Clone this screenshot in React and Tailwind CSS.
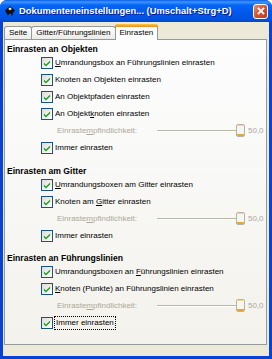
import React from 'react';

const font = { fontFamily: '"Liberation Sans", Arial, sans-serif' };

const Check = () => (
  <span className="w-[12px] h-[12px] border border-[#1C5180] bg-[linear-gradient(135deg,#DCDCD7,#FFFFFF)] flex items-center justify-center shrink-0">
    <svg width="8" height="8" viewBox="0 0 9 9">
      <path d="M1 4 L3.3 6.3 L8 1.6 L8 3.8 L3.3 8.4 L1 6.2 Z" fill="#21A121" />
    </svg>
  </span>
);

const U = ({ children }) => <span className="underline underline-offset-[1px]">{children}</span>;

const Row = ({ children, focus }) => (
  <div className="h-[17px] flex items-center pl-[34px]">
    <Check />
    <span className={focus ? 'ml-[1px] px-[1px] border border-dotted border-black leading-[12px] whitespace-nowrap' : 'ml-[2px] leading-[12px] whitespace-nowrap'}>
      {children}
    </span>
  </div>
);

const Slider = () => (
  <div className="h-[17px] flex items-center pl-[50px] text-[#ACA899]">
    <span className="w-[100px] leading-[12px] whitespace-nowrap">
      Einraste<U>m</U>pfindlichkeit:
    </span>
    <div className="relative w-[88px] h-[13px] flex items-center">
      <div className="w-[80px] h-[2px] border-t border-[#B9B8AE] border-b border-b-white" />
      <div className="absolute left-[79px] top-0 w-[9px] h-[13px] border border-[#B4B3A8] rounded-[2px] bg-[#F7F6EE] overflow-hidden flex flex-col justify-between">
        <div className="h-[1px] bg-[#F7D595]" />
        <div className="h-[2px] bg-[#E8A33C]" />
      </div>
    </div>
    <span className="ml-[3px] leading-[12px]">50,0</span>
  </div>
);

const Header = ({ children }) => (
  <div className="h-[10px] flex items-center font-bold text-[8.6px] whitespace-nowrap">{children}</div>
);

const Tab = ({ children, active }) =>
  active ? (
    <div className="h-[16px] -mb-[1px] relative z-10 px-[4px] bg-white border-x border-[#919B9C] rounded-t-[3px] flex flex-col">
      <div className="h-[3px] -mx-[5px] rounded-t-[3px] bg-[linear-gradient(#FFC83C,#E68B2C)]" />
      <span className="leading-[12px] whitespace-nowrap">{children}</span>
    </div>
  ) : (
    <div className="h-[13px] px-[4px] border-x border-t border-[#919B9C] rounded-t-[3px] bg-[linear-gradient(#FFFFFF,#ECEBE6)] flex items-center -mr-[1px]">
      <span className="leading-[12px] whitespace-nowrap">{children}</span>
    </div>
  );

export default function App() {
  return (
    <div className="w-[272px] h-[359px] bg-[#0842D6] rounded-t-[7px] flex flex-col overflow-hidden text-[8px] text-black" style={font}>
      <div className="h-[22px] shrink-0 flex items-center pl-[4px] pr-[4px] bg-[linear-gradient(#0A5DE8_0px,#3D95FF_2px,#0666F5_5px,#0058EE_12px,#0052E0_19px,#0047D0_22px)]">
        <svg width="12" height="12" viewBox="0 0 13 13" className="shrink-0">
          <path d="M6.5 1 L12 6 L10 8 L9 12 L7 9 L4 11 L1 6 Z" fill="#111" />
          <path d="M6.5 2.5 L9 5 L7.5 4.6 L6.5 6 L5 4.4 L4 5 Z" fill="#fff" />
        </svg>
        <span className="ml-[3px] text-white font-bold text-[9.4px] whitespace-nowrap [text-shadow:1px_1px_0_#0A1883]">
          Dokumenteneinstellungen... (Umschalt+Strg+D)
        </span>
        <div className="ml-auto w-[15px] h-[15px] rounded-[3px] border border-white bg-[linear-gradient(135deg,#EB8C6E,#D5532F_50%,#C3381A)] flex items-center justify-center">
          <svg width="8" height="8" viewBox="0 0 9 9">
            <path d="M1 1 L8 8 M8 1 L1 8" stroke="#fff" strokeWidth="2" />
          </svg>
        </div>
      </div>
      <div className="flex-1 mx-[3px] mb-[3px] bg-[#ECE9D8] flex flex-col pl-[1px] pr-[2px] pb-[11px]">
        <div className="h-[17px] shrink-0 flex items-end">
          <Tab>Seite</Tab>
          <Tab>Gitter/Führungslinien</Tab>
          <Tab active>Einrasten</Tab>
        </div>
        <div className="flex-1 border border-[#919B9C] bg-[linear-gradient(#FDFDFE,#F3F2EC)] pt-[4px] pl-[2px]">
          <Header>Einrasten an Objekten</Header>
          <Row><U>U</U>mrandungsbox an Führungslinien einrasten</Row>
          <Row>Knoten an Objekten einrasten</Row>
          <Row>An Objektpfaden einrasten</Row>
          <Row>An Objekt<U>k</U>noten einrasten</Row>
          <Slider />
          <Row>Immer einrasten</Row>
          <div className="h-[10px]" />
          <Header>Einrasten am Gitter</Header>
          <Row><U>U</U>mrandungsboxen am Gitter einrasten</Row>
          <Row>Knoten am <U>G</U>itter einrasten</Row>
          <Slider />
          <Row>Immer einrasten</Row>
          <div className="h-[9px]" />
          <Header>Einrasten an Führungslinien</Header>
          <Row>Umrandungsboxen an <U>F</U>ührungslinien einrasten</Row>
          <Row><U>K</U>noten (Punkte) an Führungslinien einrasten</Row>
          <Slider />
          <Row focus>Immer einrasten</Row>
        </div>
      </div>
    </div>
  );
}
